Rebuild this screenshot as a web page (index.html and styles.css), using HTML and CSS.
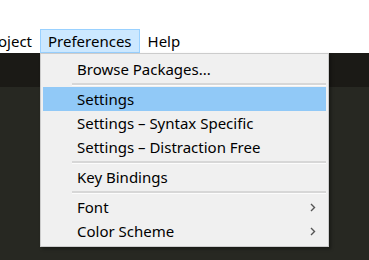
FILE: index.html
```html
<!DOCTYPE html>
<html lang="en">
<head>
  <meta charset="UTF-8">
  <meta name="viewport" content="width=device-width, initial-scale=1.0">
  <title>Preferences menu</title>
  <link rel="stylesheet" href="styles.css">
</head>
<body>

  <div class="window">
    <div class="titlebar"></div>

    <nav class="menubar">
      <span class="menubar-item project">Project</span>
      <span class="menubar-item active">Preferences</span>
      <span class="menubar-item">Help</span>
    </nav>

    <div class="workspace">
      <div class="tabbar"></div>
      <div class="editor"></div>
    </div>

    <!-- Dropdown for Preferences -->
    <ul class="dropdown">
      <li class="menu-item">Browse Packages...</li>
      <li class="separator"></li>
      <li class="menu-item selected">Settings</li>
      <li class="menu-item">Settings – Syntax Specific</li>
      <li class="menu-item">Settings – Distraction Free</li>
      <li class="separator"></li>
      <li class="menu-item">Key Bindings</li>
      <li class="separator"></li>
      <li class="menu-item has-sub">
        <span>Font</span>
        <svg class="chevron" width="6" height="9" viewBox="0 0 6 9"><path d="M1 1 L4.5 4.5 L1 8" fill="none" stroke="#555" stroke-width="1.4"/></svg>
      </li>
      <li class="menu-item has-sub">
        <span>Color Scheme</span>
        <svg class="chevron" width="6" height="9" viewBox="0 0 6 9"><path d="M1 1 L4.5 4.5 L1 8" fill="none" stroke="#555" stroke-width="1.4"/></svg>
      </li>
    </ul>
  </div>

</body>
</html>
```

FILE: styles.css
```css
/* Reset */
* {
  margin: 0;
  padding: 0;
  box-sizing: border-box;
}

body {
  font-family: 'Noto Sans', 'Open Sans', sans-serif;
  font-size: 15px;
  color: #000;
  background: #fff;
  overflow: hidden;
}

.window {
  position: relative;
  width: 369px;
  height: 260px;
  display: flex;
  flex-direction: column;
}

/* Title area */
.titlebar {
  height: 29px;
  background: #fff;
}

/* Menu bar (scrolled so "Project" is cut at the left edge) */
.menubar {
  height: 24px;
  display: flex;
  align-items: stretch;
  background: #fff;
  margin-left: -25px;
}

.menubar-item {
  display: flex;
  align-items: center;
  padding: 0 7px;
  border: 1px solid transparent;
  line-height: 1;
}

.menubar-item.active {
  background: #cce8ff;
  border-color: #99d1ff;
}

/* Editor area */
.workspace {
  flex-grow: 1;
  display: flex;
  flex-direction: column;
}

.tabbar {
  height: 34px;
  background: #1b1a16;
}

.editor {
  flex-grow: 1;
  background: #272822;
}

/* Dropdown */
.dropdown {
  position: absolute;
  top: 53px;
  left: 40px;
  width: 289px;
  list-style: none;
  background: #f0f0f0;
  border: 1px solid #cccccc;
  padding: 3px 2px;
  box-shadow: 2px 2px 3px rgba(0, 0, 0, 0.35);
}

.menu-item {
  height: 24px;
  display: flex;
  align-items: center;
  justify-content: space-between;
  padding-left: 34px;
  padding-right: 10px;
}

.menu-item.selected {
  background: #91c9f7;
}

.separator {
  height: 6px;
  display: flex;
  flex-direction: column;
  justify-content: center;
  padding-left: 29px;
}

.separator::before {
  content: "";
  display: block;
  height: 2px;
  background: #d7d7d7;
  border-bottom: 1px solid #fcfcfc;
}

.chevron {
  display: block;
}
```
